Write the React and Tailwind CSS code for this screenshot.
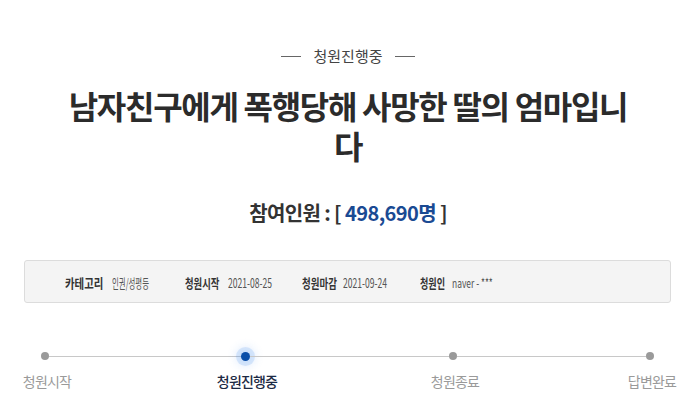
function Cell({ w, ml, scale, className, children }) {
  return (
    <span className={`block shrink-0 overflow-visible whitespace-nowrap ${ml} ${w}`}>
      <span className={`inline-block origin-left whitespace-nowrap ${scale} ${className}`}>{children}</span>
    </span>
  );
}

export default function App() {
  const font = { fontFamily: '"Noto Sans CJK KR", "Noto Sans", sans-serif' };
  const label = "font-bold text-[#333] text-[13px]";
  const value = "text-[#555] text-[13px]";
  return (
    <div className="w-[696px] h-[401px] bg-white overflow-hidden" style={font}>
      <div className="mt-[46px] flex items-center justify-center gap-[12px] h-[20px]">
        <span className="block w-[20px] h-px bg-[#666]" />
        <span className="text-[15px] leading-[20px] text-[#444] tracking-[0px]">청원진행중</span>
        <span className="block w-[20px] h-px bg-[#666]" />
      </div>
      <h1 className="mt-[19px] mx-auto max-w-[620px] text-center text-[32px] leading-[40px] font-bold text-[#2b2b2b] tracking-[-1.3px]">
        남자친구에게 폭행당해 사망한 딸의 엄마입니<br />다
      </h1>
      <div className="mt-[34px] text-center text-[20px] leading-[28px] font-bold text-[#333] tracking-[-0.6px]">
        참여인원 : [ <span className="text-[#1a4a93]">498,690명</span> ]
      </div>
      <div className="mt-[33px] ml-[24px] w-[647px] h-[43px] bg-[#f4f4f4] border border-[#dcdcdc] rounded-[3px] flex items-center pl-[40px] leading-[20px]">
        <Cell ml="ml-0" w="w-[42px]" scale="scale-x-[0.8]" className={label}>카테고리</Cell>
        <Cell ml="ml-[5px]" w="w-[38px]" scale="scale-x-[0.57]" className={value}>인권/성평등</Cell>
        <Cell ml="ml-[35px]" w="w-[37px]" scale="scale-x-[0.72]" className={label}>청원시작</Cell>
        <Cell ml="ml-[6px]" w="w-[43px]" scale="scale-x-[0.66]" className={value}>2021-08-25</Cell>
        <Cell ml="ml-[31px]" w="w-[38px]" scale="scale-x-[0.73]" className={label}>청원마감</Cell>
        <Cell ml="ml-[3px]" w="w-[44px]" scale="scale-x-[0.66]" className={value}>2021-09-24</Cell>
        <Cell ml="ml-[33px]" w="w-[27px]" scale="scale-x-[0.7]" className={label}>청원인</Cell>
        <Cell ml="ml-[5px]" w="w-[37px]" scale="scale-x-[0.65]" className={value}>naver - ***</Cell>
      </div>
      <div className="mt-[43px] h-[20px] flex items-center pl-[41px]">
        <span className="block w-[8px] h-[8px] rounded-full bg-[#9a9a9a]" />
        <span className="block w-[192px] h-px bg-[#c8c8c8]" />
        <span className="block w-[9px] h-[9px] rounded-full bg-[#0b4fa8] shadow-[0_0_0_5px_rgba(80,150,240,0.18),0_0_8px_6px_rgba(80,150,240,0.15)]" />
        <span className="block w-[199px] h-px bg-[#c8c8c8]" />
        <span className="block w-[8px] h-[8px] rounded-full bg-[#9a9a9a]" />
        <span className="block w-[189px] h-px bg-[#c8c8c8]" />
        <span className="block w-[8px] h-[8px] rounded-full bg-[#9a9a9a]" />
      </div>
      <div className="mt-[5px] h-[20px] flex text-[14px] leading-[20px] tracking-[-0.8px]">
        <span className="ml-[7px] w-[80px] text-center text-[#9a9a9a]">청원시작</span>
        <span className="ml-[120px] w-[80px] text-center text-[#1c2a44] font-medium">청원진행중</span>
        <span className="ml-[128px] w-[80px] text-center text-[#9a9a9a]">청원종료</span>
        <span className="ml-[117px] w-[80px] text-center text-[#9a9a9a]">답변완료</span>
      </div>
    </div>
  );
}
